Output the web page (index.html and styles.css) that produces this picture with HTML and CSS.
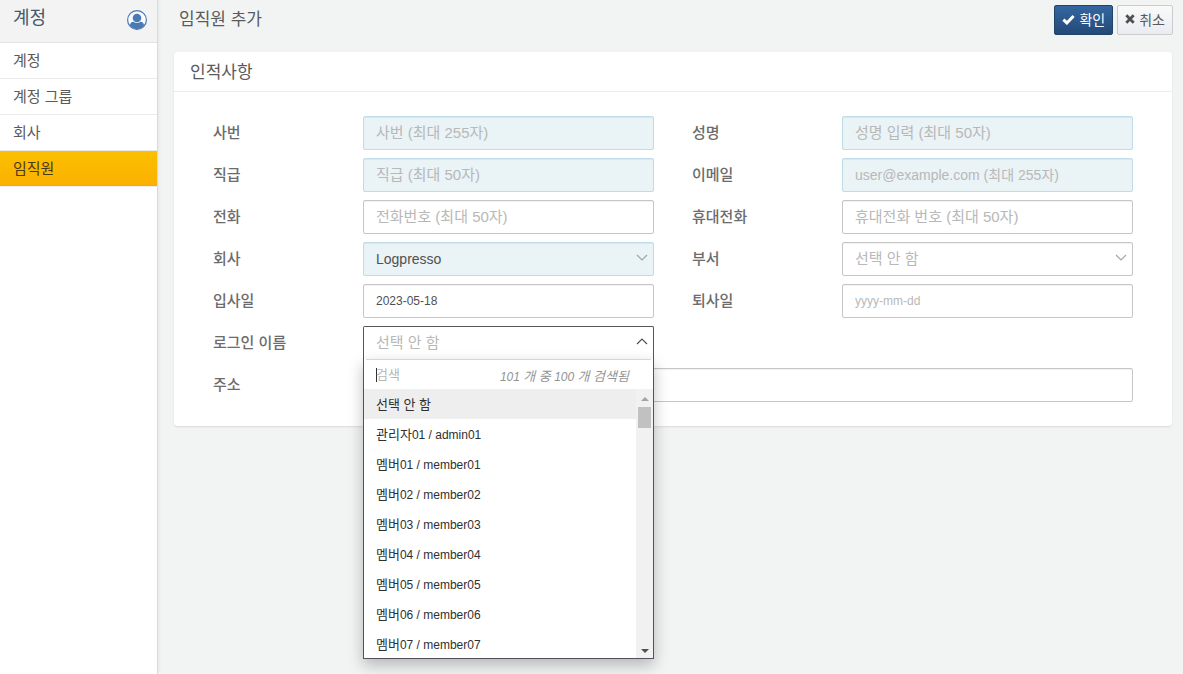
FILE: index.html
```html
<!DOCTYPE html>
<html lang="ko">
<head>
<meta charset="utf-8">
<meta name="viewport" content="width=device-width, initial-scale=1">
<title>임직원 추가</title>
<link rel="stylesheet" href="styles.css">
</head>
<body>
<div class="app">
  <aside class="sidebar">
    <header class="sidebar-head">
      <h2 class="sidebar-title">계정</h2>
      <svg class="user-icon" viewBox="0 0 20 20" aria-hidden="true">
        <circle cx="10" cy="10" r="9.4" fill="#f8fafc" stroke="#4a7ab5" stroke-width="1.2"/>
        <circle cx="10" cy="8" r="4.300" fill="#4a7ab5"/>
        <path d="M2.900 15.300c.2-2.200 1.500-3.400 3.600-3.600 2.100 1.600 4.900 1.600 7 0 2.100.2 3.400 1.400 3.600 3.600A8.900 8.900 0 0 1 10 19.200a8.900 8.900 0 0 1-7.100-3.900z" fill="#4a7ab5"/>
      </svg>
    </header>
    <nav class="menu">
      <a class="menu-item" href="#">계정</a>
      <a class="menu-item" href="#">계정 그룹</a>
      <a class="menu-item" href="#">회사</a>
      <a class="menu-item active" href="#" aria-current="page">임직원</a>
    </nav>
  </aside>

  <main class="main">
    <header class="topbar">
      <h1 class="page-title">임직원 추가</h1>
      <div class="actions">
        <button class="btn primary" type="submit" form="employee">
          <svg class="btn-icon check" viewBox="0 0 12 10" aria-hidden="true"><path d="M1.300 5.200l3.200 3L10.700 1.800" fill="none" stroke="#fff" stroke-width="2.800"/></svg>확인</button>
        <button class="btn" type="button">
          <svg class="btn-icon cross" viewBox="0 0 10 10" aria-hidden="true"><path d="M1.300 1.300l7.400 7.400M8.700 1.300L1.300 8.700" fill="none" stroke="#505050" stroke-width="2.800"/></svg>취소</button>
      </div>
    </header>

    <section class="card">
      <h2 class="card-title">인적사항</h2>
      <form class="form" id="employee">
        <div class="field"><label for="no">사번</label><input class="control required" id="no" type="text" placeholder="사번 (최대 255자)"></div>
        <div class="field"><label for="name">성명</label><input class="control required" id="name" type="text" placeholder="성명 입력 (최대 50자)"></div>
        <div class="field"><label for="rank">직급</label><input class="control required" id="rank" type="text" placeholder="직급 (최대 50자)"></div>
        <div class="field"><label for="email">이메일</label><input class="control required latin" id="email" type="email" placeholder="user@example.com (최대 255자)"></div>
        <div class="field"><label for="tel">전화</label><input class="control" id="tel" type="tel" placeholder="전화번호 (최대 50자)"></div>
        <div class="field"><label for="mobile">휴대전화</label><input class="control" id="mobile" type="tel" placeholder="휴대전화 번호 (최대 50자)"></div>
        <div class="field"><label for="company">회사</label>
          <div class="select">
            <select class="control required latin" id="company"><option>Logpresso</option></select>
            <svg class="chevron" viewBox="0 0 12 8" aria-hidden="true"><path d="M1 1l5 5 5-5"/></svg>
          </div>
        </div>
        <div class="field"><label for="dept">부서</label>
          <div class="select">
            <select class="control empty" id="dept"><option>선택 안 함</option></select>
            <svg class="chevron" viewBox="0 0 12 8" aria-hidden="true"><path d="M1 1l5 5 5-5"/></svg>
          </div>
        </div>
        <div class="field"><label for="join">입사일</label><input class="control date" id="join" type="text" value="2023-05-18"></div>
        <div class="field"><label for="leave">퇴사일</label><input class="control date" id="leave" type="text" placeholder="yyyy-mm-dd"></div>
        <div class="field start"><label for="login">로그인 이름</label>
          <div class="select open">
            <button class="control empty" id="login" type="button" aria-haspopup="listbox" aria-expanded="true">선택 안 함</button>
            <svg class="chevron" viewBox="0 0 12 8" aria-hidden="true"><path d="M1 6l5-5 5 5"/></svg>
            <div class="popup">
              <div class="search">
                <span class="caret" aria-hidden="true"></span>
                <input class="search-input" type="text" placeholder="검색" aria-label="검색">
                <span class="count">101 <span class="ko">개 중</span> 100 <span class="ko">개 검색됨</span></span>
              </div>
              <div class="list">
                <ul class="options" role="listbox" aria-label="로그인 이름">
                  <li class="option selected" role="option" aria-selected="true"><span class="ko">선택 안 함</span></li>
                  <li class="option" role="option"><span class="ko">관리자</span>01 / admin01</li>
                  <li class="option" role="option"><span class="ko">멤버</span>01 / member01</li>
                  <li class="option" role="option"><span class="ko">멤버</span>02 / member02</li>
                  <li class="option" role="option"><span class="ko">멤버</span>03 / member03</li>
                  <li class="option" role="option"><span class="ko">멤버</span>04 / member04</li>
                  <li class="option" role="option"><span class="ko">멤버</span>05 / member05</li>
                  <li class="option" role="option"><span class="ko">멤버</span>06 / member06</li>
                  <li class="option" role="option"><span class="ko">멤버</span>07 / member07</li>
                </ul>
                <div class="scrollbar" aria-hidden="true">
                  <svg class="arrow" viewBox="0 0 8 4"><path d="M0 4l4-4 4 4z" fill="#a3a3a3"/></svg>
                  <span class="thumb"></span>
                  <svg class="arrow down" viewBox="0 0 8 4"><path d="M0 0h8L4 4z" fill="#505050"/></svg>
                </div>
              </div>
            </div>
          </div>
        </div>
        <div class="field wide"><label for="addr">주소</label><input class="control" id="addr" type="text"></div>
      </form>
    </section>
  </main>
</div>
</body>
</html>
```

FILE: styles.css
```css
* { box-sizing: border-box; }

body {
  margin: 0;
  background: #f2f4f4;
  color: #505050;
  font: 15px/20px "Noto Sans CJK KR", sans-serif;
}

h1, h2 { margin: 0; font-weight: 400; }

.app { display: flex; min-height: 100vh; }

/* sidebar */
.sidebar {
  flex: none;
  width: 158px;
  background: #fff;
  border-right: 1px solid #d9dada;
  box-shadow: 0 0 4px rgba(0, 0, 0, .08);
}
.sidebar-head {
  display: flex;
  justify-content: space-between;
  height: 43px;
  padding: 6px 10px 0 13px;
  background: #f3f3f3;
  border-bottom: 1px solid #e2e2e2;
}
.sidebar-title { color: #44586c; font-size: 18px; line-height: 20px; }
.user-icon { width: 20px; height: 20px; margin-top: 4px; }
.menu-item {
  display: block;
  height: 36px;
  padding: 7px 13px;
  border-bottom: 1px solid #eaeaea;
  color: #5a5a5a;
  text-decoration: none;
}
.menu-item.active {
  background: linear-gradient(#fbc000, #fbb000);
  color: #4a3a18;
}

/* top bar */
.main { flex: 1; min-width: 0; padding: 5px 11px 20px 16px; }
.topbar { display: flex; justify-content: space-between; height: 47px; padding: 0 0 0 5px; }
.page-title { color: #5a5a5a; font-size: 17px; line-height: 26px; }
.actions { display: flex; gap: 4px; margin-right: -1px; }
.btn {
  display: flex;
  align-items: center;
  gap: 4px;
  height: 30px;
  padding: 0 7px 2px;
  border: 1px solid #ccc;
  border-radius: 2px;
  background: linear-gradient(#fafafa, #e9ecf1);
  color: #5a5a5a;
  font: 14px/20px "Noto Sans CJK KR", sans-serif;
}
.btn.primary {
  border-color: #204468;
  background: linear-gradient(#34669f, #234a78);
  color: #fff;
}
.btn-icon { width: 10px; height: 10px; }
.btn-icon.check { width: 13px; height: 11px; }

/* card */
.card {
  background: #fff;
  border-radius: 4px;
  box-shadow: 0 1px 2px rgba(0, 0, 0, .1);
}
.card-title {
  height: 40px;
  padding: 6px 16px;
  border-bottom: 1px solid #ebebeb;
  color: #5a5a5a;
  font-size: 17px;
  line-height: 26px;
}
.form {
  display: grid;
  grid-template-columns: 1fr 1fr;
  gap: 8px 38px;
  padding: 24px 39px 24px;
}
.field {
  display: grid;
  grid-template-columns: 150px minmax(0, 1fr);
  line-height: 32px;
}
.field > label { color: #6c6c6c; font-weight: 500; }
.field.start { grid-column: 1; }
.field.wide { grid-column: 1 / -1; }

.control {
  display: block;
  width: 100%;
  height: 34px;
  margin: 0;
  padding: 0 12px 1px;
  border: 1px solid #c6c6c6;
  border-radius: 2px;
  outline: none;
  appearance: none;
  background: #fff;
  box-shadow: inset 0 1px 1px rgba(0, 0, 0, .06);
  color: #505050;
  font: 15px/20px "Liberation Sans", "Noto Sans CJK KR", sans-serif;
  text-align: left;
}
.control::placeholder, .control.empty { color: #b8b8b8; opacity: 1; }
.control.required { border-color: #bfdce8; background: #eaf3f6; }
.control.latin { padding-bottom: 0; font-size: 14px; }
.control.date { padding-bottom: 0; font-size: 12px; }

.select { position: relative; }
.chevron {
  position: absolute;
  top: 12px;
  right: 6px;
  width: 12px;
  height: 8px;
  fill: none;
  stroke: #a5a5a5;
  stroke-width: 1.2;
  pointer-events: none;
}
.open .control { border-color: #55565a; border-bottom: 0; border-radius: 2px 2px 0 0; box-shadow: none; }
.open .chevron { stroke: #505050; }

/* drop-down */
.popup {
  position: absolute;
  z-index: 2;
  top: 33px;
  left: 0;
  right: 0;
  border: 1px solid #55505a;
  border-top: 0;
  background: #fff;
  box-shadow: 0 6px 14px rgba(0, 0, 0, .25);
  color: #303030;
  font: 12px/20px "Liberation Sans", "Noto Sans CJK KR", sans-serif;
}
.ko { font-size: 13px; }
.search {
  display: flex;
  align-items: center;
  height: 30px;
  margin: 0 2px;
  padding: 0 22px 0 10px;
  border-top: 1px solid #d6d6d6;
}
.caret { width: 1px; height: 14px; margin-right: -1px; background: #303030; }
.search-input {
  flex: 1;
  min-width: 0;
  padding: 0;
  border: 0;
  outline: none;
  background: none;
  color: #303030;
  font: 13px/20px "Liberation Sans", "Noto Sans CJK KR", sans-serif;
}
.search-input::placeholder { color: #b8b8b8; opacity: 1; }
.count { padding-top: 4px; color: #949494; font-style: italic; white-space: nowrap; }
.list { display: flex; height: 269px; }
.options {
  flex: 1;
  margin: 0;
  padding: 0;
  overflow: hidden;
  list-style: none;
}
.option { height: 30px; padding: 6px 12px 4px; white-space: nowrap; }
.option.selected { background: #eee; }
.scrollbar {
  display: flex;
  flex-direction: column;
  align-items: center;
  width: 17px;
  padding: 8px 0 5px;
  background: #f1f1f1;
}
.arrow { width: 8px; height: 4px; }
.arrow.down { margin-top: auto; }
.thumb { width: 13px; height: 21px; margin-top: 6px; background: #c1c1c1; }
```
